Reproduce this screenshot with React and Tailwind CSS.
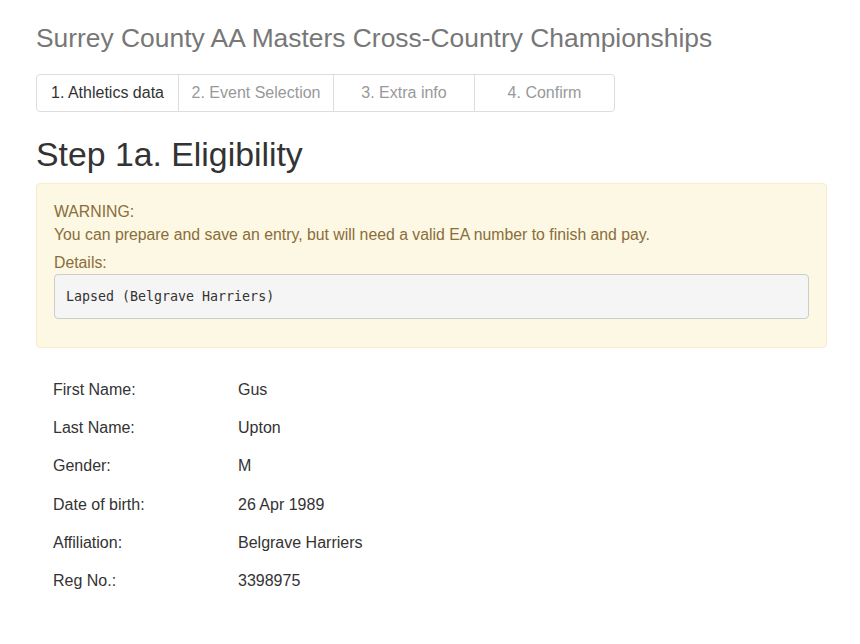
const tabs = [
  { label: '1. Athletics data', w: 'w-[141px]', active: true },
  { label: '2. Event Selection', w: 'w-[155px]' },
  { label: '3. Extra info', w: 'w-[141px]' },
  { label: '4. Confirm', w: 'w-[140px]' },
];

const details = [
  ['First Name:', 'Gus'],
  ['Last Name:', 'Upton'],
  ['Gender:', 'M'],
  ['Date of birth:', '26 Apr 1989'],
  ['Affiliation:', 'Belgrave Harriers'],
  ['Reg No.:', '3398975'],
];

export default function App() {
  return (
    <div className="min-h-screen bg-white font-['Liberation_Sans',Arial,sans-serif] text-[#333]">
      <div className="pl-[36px] pr-[33px] pt-[23px]">
        <h1 className="text-[26.4px] leading-[30px] text-[#777]">
          Surrey County AA Masters Cross-Country Championships
        </h1>

        <div className="mt-[21px] flex h-[38px] w-fit rounded border border-[#ddd] text-[16px]">
          {tabs.map((tab, i) => (
            <div
              key={tab.label}
              className={`flex items-center justify-center ${tab.w} ${
                i > 0 ? 'border-l border-[#ddd]' : ''
              } ${tab.active ? 'text-[#333]' : 'text-[#999]'}`}
            >
              {tab.label}
            </div>
          ))}
        </div>

        <h2 className="mt-[22px] text-[33.8px] leading-[40px] text-[#333]">Step 1a. Eligibility</h2>

        <div className="mt-[9px] h-[165px] rounded border border-[#faebcc] bg-[#fcf8e3] px-[17px] pt-[16px] text-[15.8px] text-[#8a6d3b]">
          <div className="leading-[23px]">WARNING:</div>
          <div className="leading-[23px]">
            You can prepare and save an entry, but will need a valid EA number to finish and pay.
          </div>
          <div className="mt-[5px] leading-[23px]">Details:</div>
          <pre className="flex h-[45px] items-center rounded border border-[#ccc] bg-[#f5f5f5] px-[11px] font-['DejaVu_Sans_Mono',monospace] text-[13.3px] text-[#333]">
            Lapsed (Belgrave Harriers)
          </pre>
        </div>

        <div className="mt-[23px] pl-[17px] text-[16px]">
          {details.map(([label, value]) => (
            <div key={label} className="flex h-[38.2px] items-center">
              <div className="w-[185px]">{label}</div>
              <div>{value}</div>
            </div>
          ))}
        </div>
      </div>
    </div>
  );
}
